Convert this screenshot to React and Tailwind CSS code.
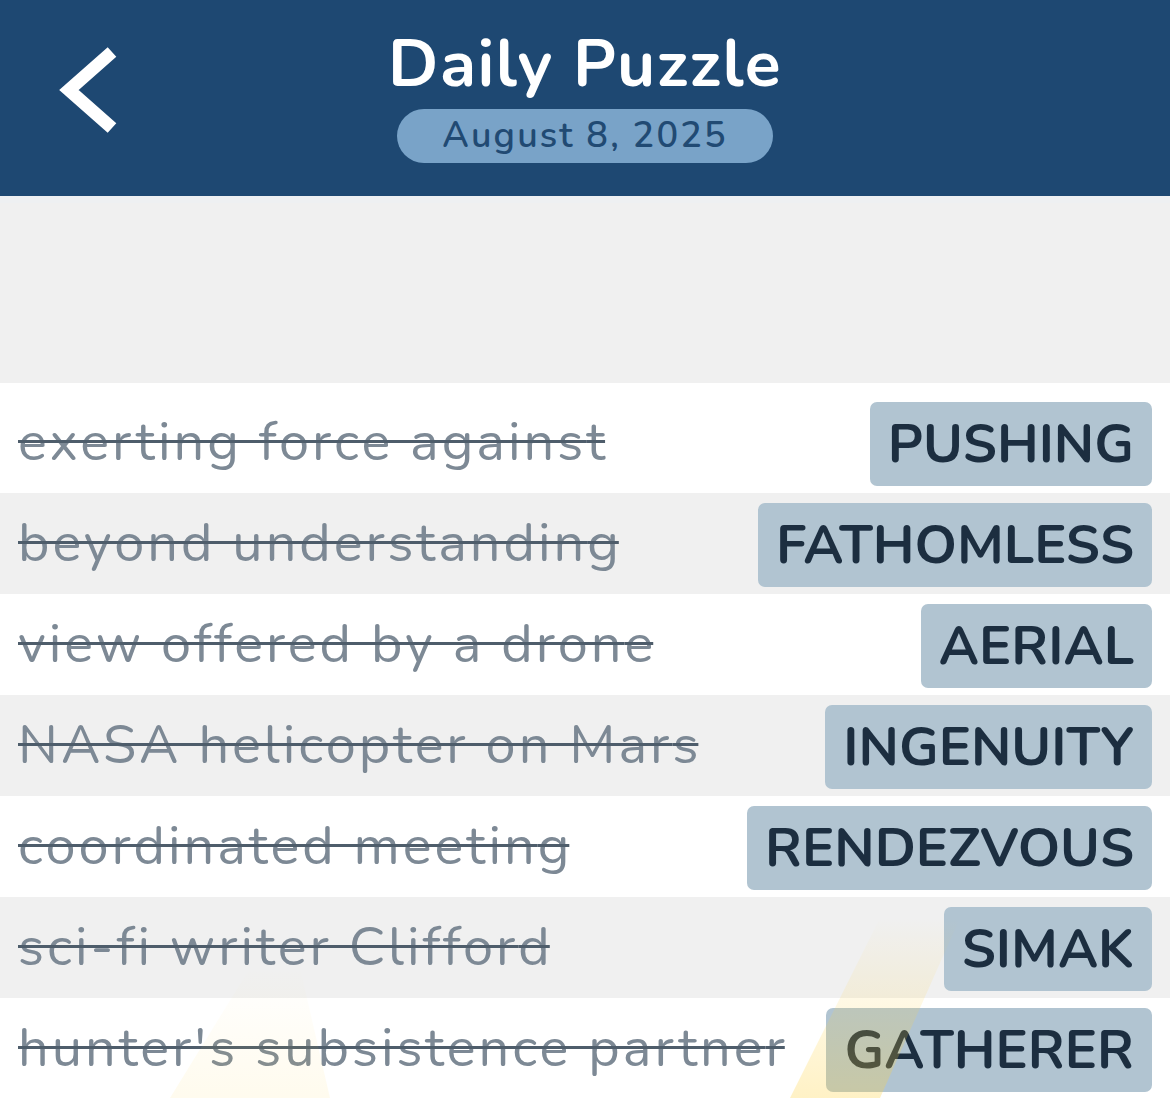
import React from 'react';

const clues = [
  { clue: 'exerting force against', answer: 'PUSHING' },
  { clue: 'beyond understanding', answer: 'FATHOMLESS' },
  { clue: 'view offered by a drone', answer: 'AERIAL' },
  { clue: 'NASA helicopter on Mars', answer: 'INGENUITY' },
  { clue: 'coordinated meeting', answer: 'RENDEZVOUS' },
  { clue: 'sci-fi writer Clifford', answer: 'SIMAK' },
  { clue: "hunter's subsistence partner", answer: 'GATHERER' },
];

const font = { fontFamily: '"Nunito", "Open Sans", "Noto Sans", sans-serif' };

const App = () => {
  return (
    <div className="w-[1170px] h-[1098px] overflow-hidden bg-white flex flex-col relative" style={font}>
      {/* Header */}
      <div className="h-[196px] bg-[#1e4872] flex items-center relative shrink-0">
        <button className="absolute left-[52px] top-[40px] w-[80px] h-[100px]" aria-label="Back">
          <svg width="80" height="100" viewBox="0 0 80 100">
            <path d="M60 12 L17 50 L60 88" fill="none" stroke="#ffffff" strokeWidth="13" strokeLinecap="butt" strokeLinejoin="miter" />
          </svg>
        </button>
        <div className="flex-1 flex flex-col items-center -mt-[2px]">
          <h1 className="text-[66px] leading-[66px] font-bold text-white tracking-[1.5px]">Daily Puzzle</h1>
          <div className="mt-[12px] w-[376px] h-[54px] rounded-full bg-[#79a3c8] flex items-center justify-center">
            <span className="text-[36px] font-semibold text-[#214a73] leading-none tracking-[2.2px]">August 8, 2025</span>
          </div>
        </div>
      </div>

      {/* Empty grey area */}
      <div className="h-[187px] bg-[#f0f0f0] border-t-[7px] border-[#eef0f2] shrink-0"></div>

      {/* Clue list */}
      <div className="flex flex-col pt-[9px]">
        {clues.map((c, i) => (
          <div
            key={c.answer}
            className={`h-[101px] flex items-start justify-between pl-[18px] pr-[18px] pt-[10px] ${i % 2 === 1 ? 'bg-[#f0f0f0]' : 'bg-white'}`}
          >
            <span className="text-[54px] leading-[80px] tracking-[3px] text-[#7d8995] line-through decoration-[#4e5d6b] decoration-[3px] whitespace-nowrap">
              {c.clue.slice(0, -1)}
              <span className="tracking-normal">{c.clue.slice(-1)}</span>
            </span>
            <span className="h-[84px] px-[18px] rounded-[7px] bg-[#b1c4d1] text-[#1c2e40] text-[54px] font-bold flex items-center leading-none whitespace-nowrap">
              {c.answer}
            </span>
          </div>
        ))}
      </div>

      {/* faint watermark peeking in from the bottom */}
      <svg className="absolute left-0 bottom-0 pointer-events-none" width="1170" height="220" viewBox="0 0 1170 220">
        <defs>
          <linearGradient id="wm" x1="0" y1="0" x2="0" y2="1">
            <stop offset="0" stopColor="#ffd23f" stopOpacity="0" />
            <stop offset="1" stopColor="#ffd23f" stopOpacity="0.3" />
          </linearGradient>
        </defs>
        <polygon points="250,90 300,90 330,220 170,220" fill="url(#wm)" opacity="0.3" />
        <polygon points="880,40 960,40 880,220 790,220" fill="url(#wm)" />
      </svg>
    </div>
  );
};

export default App;
